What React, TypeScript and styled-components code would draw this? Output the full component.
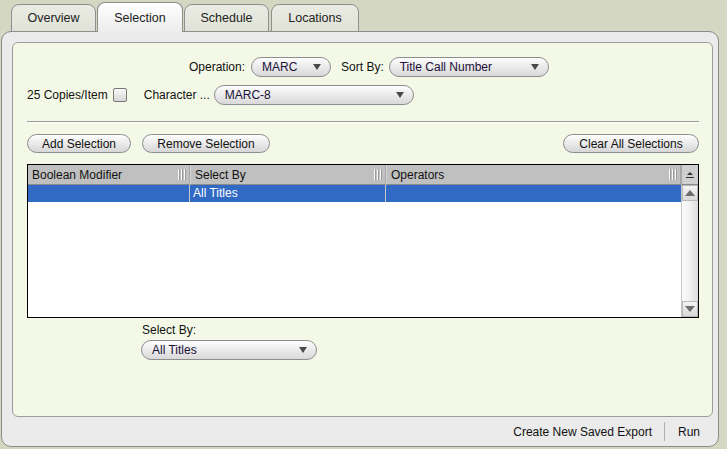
import React from "react";
import styled, { createGlobalStyle } from "styled-components";

const Global = createGlobalStyle`
  html, body { margin: 0; padding: 0; background: #d4d8c3; }
  body { font-family: "Liberation Sans", Arial, sans-serif; font-size: 12px; color: #111; }
  * { box-sizing: border-box; }
`;

const Page = styled.div`
  width: 727px;
  height: 449px;
  padding: 3px 8px 2px 1px;
  display: flex;
  flex-direction: column;
`;

const TabBar = styled.div`
  display: flex;
  gap: 1px;
  padding-left: 10px;
  height: 29px;
  align-items: flex-end;
  position: relative;
  z-index: 2;
  margin-bottom: -1px;
`;

const Tab = styled.div<{ $active?: boolean; $w: number }>`
  width: ${(p) => p.$w}px;
  height: ${(p) => (p.$active ? 30 : 28)}px;
  border: 1px solid #8e8e8e;
  border-bottom: ${(p) => (p.$active ? "none" : "1px solid #8e8e8e")};
  border-radius: 8px 8px 0 0;
  background: ${(p) =>
    p.$active ? "linear-gradient(#ffffff, #ececec)" : "linear-gradient(#eaece4, #dfe2d6)"};
  display: flex;
  align-items: center;
  justify-content: center;
  font-size: 12.5px;
  color: #222;
`;

const Panel = styled.div`
  flex: 1;
  border: 1px solid #8a8a8a;
  border-radius: 10px;
  background: #ebebeb;
  padding: 10px 5px 0 10px;
  display: flex;
  flex-direction: column;
`;

const Inner = styled.div`
  height: 375px;
  border: 1px solid #9c9c9c;
  border-radius: 6px;
  background: #f4f9e7;
  padding: 14px 13px 0 14px;
  display: flex;
  flex-direction: column;
`;

const FormRow = styled.div<{ $indent: number }>`
  display: flex;
  align-items: center;
  height: 20px;
  padding-left: ${(p) => p.$indent}px;
`;

const Label = styled.span<{ $gap?: number }>`
  margin-right: ${(p) => p.$gap ?? 6}px;
  white-space: nowrap;
`;

const SelectBox = styled.div<{ $w: number }>`
  width: ${(p) => p.$w}px;
  height: 20px;
  border: 1px solid #8d8d8d;
  border-radius: 10px;
  background: linear-gradient(#fefefe 0%, #ececec 45%, #d9d9d9 100%);
  display: flex;
  align-items: center;
  justify-content: space-between;
  padding: 0 9px 0 10px;
  color: #1a1038;
  font-size: 12px;
`;

const Arrow = styled.span`
  width: 0;
  height: 0;
  border-left: 4px solid transparent;
  border-right: 4px solid transparent;
  border-top: 6px solid #4a4a4a;
`;

const CheckBox = styled.span`
  width: 14px;
  height: 14px;
  border: 1px solid #777;
  border-radius: 2px;
  background: linear-gradient(#f8f8f8, #d6d6d6);
  margin-right: 17px;
`;

const Separator = styled.div`
  margin-top: 16px;
  height: 2px;
  border-top: 1px solid #9a9a9a;
  border-bottom: 1px solid #ffffff;
`;

const ButtonRow = styled.div`
  display: flex;
  align-items: center;
  gap: 11px;
  margin-top: 11px;
  height: 19px;
`;

const Button = styled.div<{ $w: number; $push?: boolean }>`
  width: ${(p) => p.$w}px;
  height: 19px;
  margin-left: ${(p) => (p.$push ? "auto" : "0")};
  border: 1px solid #8d8d8d;
  border-radius: 10px;
  background: linear-gradient(#fefefe 0%, #ececec 45%, #d6d6d6 100%);
  display: flex;
  align-items: center;
  justify-content: center;
  font-size: 12px;
  color: #111;
`;

const Table = styled.div`
  margin-top: 11px;
  height: 154px;
  border: 1px solid #000;
  background: #fff;
  display: grid;
  grid-template-columns: 162px 196px 1fr 17px;
  grid-template-rows: 20px 1fr;
`;

const HeadCell = styled.div<{ $first?: boolean }>`
  background: #c0c0c0;
  border-bottom: 1px solid #8a8a8a;
  border-right: 1px solid #a8a8a8;
  border-left: ${(p) => (p.$first ? "none" : "1px solid #d4d4d4")};
  display: flex;
  align-items: center;
  justify-content: space-between;
  padding: 0 4px 0 4px;
  color: #111;
  font-size: 12px;
`;

const Grip = styled.span`
  display: flex;
  gap: 2px;
  height: 11px;
  & > i {
    display: block;
    width: 1px;
    height: 11px;
    background: #fafafa;
    box-shadow: 1px 0 0 #9a9a9a;
  }
`;

const CornerCell = styled.div`
  background: #cfcfcf;
  border-bottom: 1px solid #8a8a8a;
  border-left: 1px solid #a8a8a8;
  display: flex;
  align-items: center;
  justify-content: center;
`;

const Body = styled.div`
  grid-column: 1 / 4;
  display: flex;
  flex-direction: column;
`;

const SelRow = styled.div`
  height: 17px;
  background: #316ac5;
  display: grid;
  grid-template-columns: 162px 196px 1fr;
`;

const SelCell = styled.div<{ $divider?: boolean }>`
  color: #fff;
  padding-left: 3px;
  font-size: 12px;
  line-height: 16px;
  border-right: ${(p) => (p.$divider ? "1px solid #c8c8c8" : "none")};
`;

const ScrollTrack = styled.div`
  background: linear-gradient(90deg, #fafafa, #f0f0f0 50%, #dcdcdc);
  border-left: 1px solid #c8c8c8;
  display: flex;
  flex-direction: column;
  justify-content: space-between;
`;

const ScrollBtn = styled.div`
  height: 16px;
  background: linear-gradient(#f4f4f4, #d8d8d8);
  border: 1px solid #b8b8b8;
  display: flex;
  align-items: center;
  justify-content: center;
`;

const TriUp = styled.span`
  width: 0;
  height: 0;
  border-left: 5px solid transparent;
  border-right: 5px solid transparent;
  border-bottom: 6px solid #6c6c6c;
`;

const TriDown = styled.span`
  width: 0;
  height: 0;
  border-left: 5px solid transparent;
  border-right: 5px solid transparent;
  border-top: 6px solid #6c6c6c;
`;

const BottomBlock = styled.div`
  margin-left: 114px;
  margin-top: 5px;
  display: flex;
  flex-direction: column;
  gap: 1px;
`;

const SmallLabel = styled.div`
  font-size: 12px;
  padding-left: 1px;
  height: 16px;
`;

const Footer = styled.div`
  flex: 1;
  display: flex;
  justify-content: flex-end;
  align-items: center;
  padding-right: 7px;
  font-size: 12px;
`;

const FootItem = styled.span`
  padding: 0 12px;
  height: 19px;
  display: flex;
  align-items: center;
  & + & { border-left: 1px solid #b0b0b0; padding: 0 6px 0 13px; }
`;

function HeaderIcon() {
  return (
    <svg width="10" height="8" viewBox="0 0 10 8">
      <path d="M5 1 L8 4 L2 4 Z" fill="#333" />
      <rect x="1" y="6" width="8" height="1" fill="#333" />
    </svg>
  );
}

const G = () => (
  <Grip>
    <i />
    <i />
    <i />
  </Grip>
);

export default function App() {
  return (
    <Page>
      <Global />
      <TabBar>
        <Tab $w={85}>Overview</Tab>
        <Tab $w={86} $active>
          Selection
        </Tab>
        <Tab $w={85}>Schedule</Tab>
        <Tab $w={88} style={{ marginLeft: 1 }}>
          Locations
        </Tab>
      </TabBar>
      <Panel>
        <Inner>
          <FormRow $indent={162}>
            <Label>Operation:</Label>
            <SelectBox $w={80}>
              MARC <Arrow />
            </SelectBox>
            <Label $gap={5} style={{ marginLeft: 10 }}>
              Sort By:
            </Label>
            <SelectBox $w={160}>
              Title Call Number <Arrow />
            </SelectBox>
          </FormRow>
          <FormRow $indent={0} style={{ marginTop: 8 }}>
            <Label $gap={5}>25 Copies/Item</Label>
            <CheckBox />
            <Label $gap={4}>Character ...</Label>
            <SelectBox $w={200}>
              MARC-8 <Arrow />
            </SelectBox>
          </FormRow>
          <Separator />
          <ButtonRow>
            <Button $w={104}>Add Selection</Button>
            <Button $w={128}>Remove Selection</Button>
            <Button $w={136} $push>
              Clear All Selections
            </Button>
          </ButtonRow>
          <Table>
            <HeadCell $first>
              Boolean Modifier <G />
            </HeadCell>
            <HeadCell>
              Select By <G />
            </HeadCell>
            <HeadCell>
              Operators <G />
            </HeadCell>
            <CornerCell>
              <HeaderIcon />
            </CornerCell>
            <Body>
              <SelRow>
                <SelCell $divider />
                <SelCell $divider>All Titles</SelCell>
                <SelCell />
              </SelRow>
            </Body>
            <ScrollTrack>
              <ScrollBtn>
                <TriUp />
              </ScrollBtn>
              <ScrollBtn>
                <TriDown />
              </ScrollBtn>
            </ScrollTrack>
          </Table>
          <BottomBlock>
            <SmallLabel>Select By:</SmallLabel>
            <SelectBox $w={176}>
              All Titles <Arrow />
            </SelectBox>
          </BottomBlock>
        </Inner>
        <Footer>
          <FootItem>Create New Saved Export</FootItem>
          <FootItem>Run</FootItem>
        </Footer>
      </Panel>
    </Page>
  );
}
